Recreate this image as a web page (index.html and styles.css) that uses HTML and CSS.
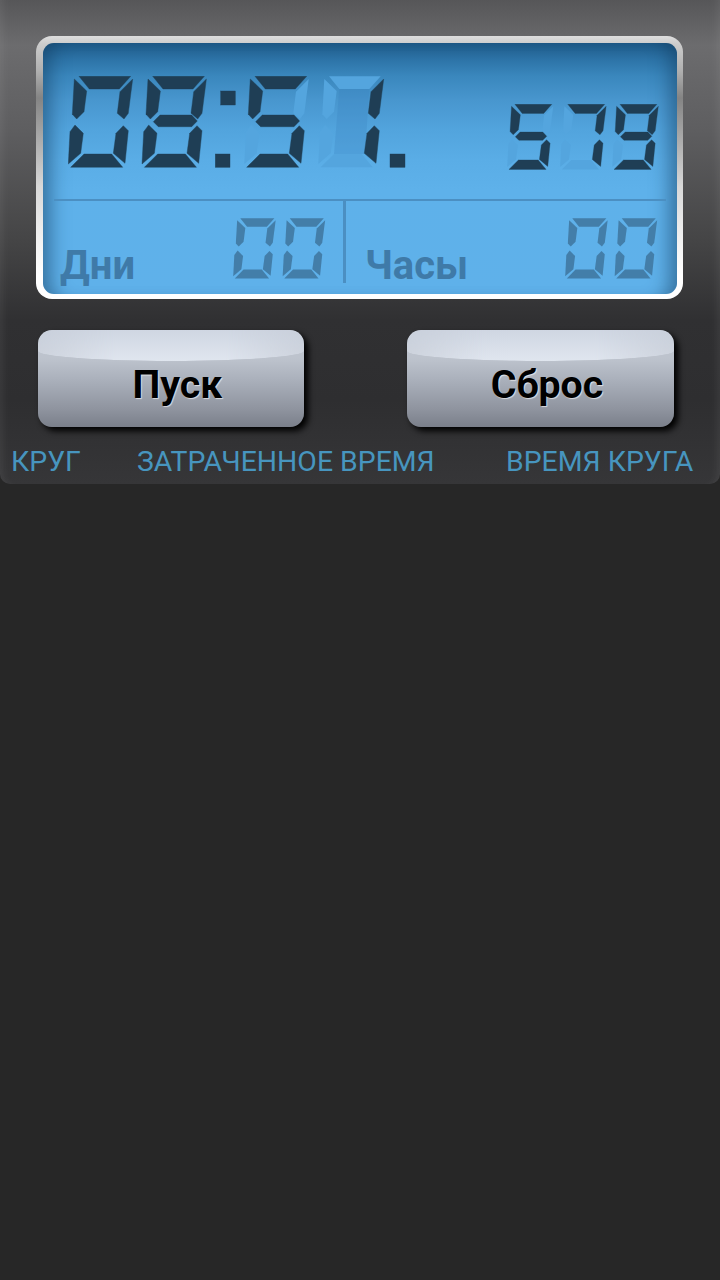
FILE: index.html
```html
<!DOCTYPE html>
<html lang="ru">
<head>
    <meta charset="UTF-8">
    <meta name="viewport" content="width=device-width, initial-scale=1.0">
    <title>Секундомер</title>
    <link rel="stylesheet" href="styles.css">
</head>
<body>
    <!-- seven segment parts, shared by all the readouts -->
    <svg class="sprite" aria-hidden="true">
        <defs>
            <polygon id="sa" points="11,0.3 62.7,0.3 51.3,13 21.3,13"/>
            <polygon id="sb" points="64.7,3 60.3,37.3 56,43 49.3,37.3 52,15.7"/>
            <polygon id="sc" points="55.3,49.7 60.3,54.7 57,87.3 45.3,77.3 48,57.3"/>
            <polygon id="sd" points="16,78 43.7,78 54.7,91.3 2.7,91.3"/>
            <polygon id="se" points="7,49 15.3,57.3 12.7,77.3 0.3,88 2,55.7"/>
            <polygon id="sf" points="6.3,3 18.7,15 16,35.7 8.7,43 4.3,38.3"/>
            <polygon id="sg" points="18.3,39 50,39 55.6,45 50,50.7 16.6,50.7 11.6,45.7"/>
            <polygon id="si" points="21.3,13 51.3,13 47,78 16,78"/>
            <g id="d0"><use href="#sa"/><use href="#sb"/><use href="#sc"/><use href="#sd"/><use href="#se"/><use href="#sf"/></g>
            <g id="d1"><use href="#sb"/><use href="#sc"/></g>
            <g id="d5"><use href="#sa"/><use href="#sc"/><use href="#sd"/><use href="#sf"/><use href="#sg"/></g>
            <g id="d7"><use href="#sa"/><use href="#sb"/><use href="#sc"/></g>
            <g id="d8"><use href="#d0"/><use href="#sg"/></g>
            <g id="d9"><use href="#sa"/><use href="#sb"/><use href="#sc"/><use href="#sd"/><use href="#sf"/><use href="#sg"/></g>
        </defs>
    </svg>

    <div class="panel">
        <div class="lcd-frame">
            <div class="lcd">
                <div class="lcd-top">
                    <svg class="time" viewBox="0 0 338 92">
                        <use href="#d0"/>
                        <use href="#d8" x="73.7"/>
                        <rect x="152.7" y="15" width="14.6" height="14"/>
                        <rect x="147.3" y="78" width="14.7" height="13.3"/>
                        <use class="ghost-inner" href="#si" x="250"/>
                        <g class="ghost">
                            <use href="#sb" x="176"/>
                            <use href="#se" x="176"/>
                            <use href="#sa" x="250"/>
                            <use href="#sf" x="250"/>
                            <use href="#se" x="250"/>
                            <use href="#sd" x="250"/>
                        </g>
                        <use href="#d5" x="176"/>
                        <use href="#d1" x="251"/>
                        <rect x="322" y="78" width="15" height="13.3"/>
                    </svg>
                    <svg class="millis" viewBox="0 0 214 92">
                        <g class="ghost">
                            <use href="#sb"/>
                            <use href="#se"/>
                            <use href="#sf" x="74"/>
                            <use href="#se" x="74"/>
                            <use href="#sd" x="74"/>
                            <use href="#se" x="147"/>
                        </g>
                        <use href="#d5"/>
                        <use href="#d7" x="74"/>
                        <use href="#d9" x="147"/>
                    </svg>
                </div>
                <div class="lcd-line"></div>
                <div class="lcd-bottom">
                    <div class="counter">
                        <span class="counter-name">Дни</span>
                        <svg class="pair" viewBox="0 0 141 92"><use href="#d0"/><use href="#d0" x="75"/></svg>
                    </div>
                    <div class="counter counter-hours">
                        <span class="counter-name">Часы</span>
                        <svg class="pair" viewBox="0 0 141 92"><use href="#d0"/><use href="#d0" x="75"/></svg>
                    </div>
                </div>
            </div>
        </div>

        <div class="buttons">
            <button class="btn">Пуск</button>
            <button class="btn btn-reset">Сброс</button>
        </div>

        <div class="columns">
            <span>КРУГ</span>
            <span>ЗАТРАЧЕННОЕ ВРЕМЯ</span>
            <span>ВРЕМЯ КРУГА</span>
        </div>
    </div>
</body>
</html>
```

FILE: styles.css
```css
body {
    margin: 0;
    height: 1280px;
    background-color: #272727;
    font-family: Roboto, "Liberation Sans", sans-serif;
}
.sprite {
    display: block;
    width: 0;
    height: 0;
}
.panel {
    height: 484px;
    box-sizing: border-box;
    padding-top: 36px;
    border-radius: 0 0 10px 10px;
    background: linear-gradient(#565658 0, #6c6c6e 45px, #5e5e60 130px, #454546 240px, #303032 320px, #2e2e30 400px, #363638 484px);
    box-shadow: inset 8px 0 8px -6px rgba(255, 255, 255, 0.08), inset -8px 0 8px -6px rgba(255, 255, 255, 0.08);
}
.lcd-frame {
    width: 647px;
    height: 263px;
    box-sizing: border-box;
    margin-left: 36px;
    padding: 7px 6px 5px 7px;
    border-radius: 16px;
    background: linear-gradient(#dedede 0, #cccccc 8px, #b0b0b0 35px, #848484 62px, #a8a8a8 100px, #d8d8d8 150px, #f2f2f2 205px, #ffffff 240px);
}
.lcd {
    height: 251px;
    border-radius: 11px;
    background: linear-gradient(#1e5a88 0, #2d74a8 17px, #3a87bd 33px, #4896ce 57px, #52a4dd 87px, #5aade6 117px, #5eb1ea 147px, #5fb1ea 251px);
    box-shadow: inset 22px 0 18px -14px rgba(18, 58, 92, 0.5), inset -22px 0 18px -14px rgba(18, 58, 92, 0.5);
}
.lcd-top {
    display: flex;
    justify-content: space-between;
    align-items: flex-start;
    height: 156px;
    box-sizing: border-box;
    padding: 33px 17px 0 25px;
}
.time {
    width: 338px;
    height: 92px;
    fill: #1f3e55;
    stroke: #1f3e55;
    stroke-width: 0.4;
}
.millis {
    width: 153px;
    height: 66px;
    margin-top: 28px;
    fill: #1f3e55;
    stroke: #1f3e55;
    stroke-width: 0.4;
}
.ghost {
    fill: #54a5de;
    stroke: none;
}
.ghost-inner {
    fill: rgba(58, 130, 190, 0.28);
    stroke: none;
}
.lcd-line {
    height: 2px;
    margin: 0 11px;
    background-color: #4b8fc2;
}
.lcd-bottom {
    display: grid;
    grid-template-columns: 300px 1fr;
    height: 82px;
}
.counter {
    display: flex;
    justify-content: space-between;
    padding: 17px 17px 0 17px;
}
.counter-hours {
    padding: 17px 19px 0 19px;
    border-left: 3px solid #4b8fc2;
}
.counter-name {
    align-self: flex-end;
    font-size: 40px;
    font-weight: 700;
    line-height: 40px;
    margin-bottom: -3px;
    color: #3f7aa8;
}
.pair {
    width: 93px;
    height: 61px;
    fill: #437ea9;
}
.buttons {
    display: flex;
    justify-content: space-between;
    margin-top: 31px;
    padding: 0 46px 0 38px;
}
.btn {
    position: relative;
    width: 266px;
    height: 97px;
    padding: 12px 0 0 13px;
    border: none;
    border-radius: 14px;
    background: linear-gradient(#c4cad5 0, #bcc2cc 30px, #aab0bb 50px, #8e939e 80px, #7a7f8a 97px);
    box-shadow: 4px 4px 6px #000;
    font-family: inherit;
    font-size: 39.3px;
    font-weight: 700;
    color: #000;
    text-shadow: 1px 1px 1px rgba(255, 255, 255, 0.65);
}
.btn::before {
    content: "";
    position: absolute;
    top: 0;
    left: 0;
    right: 0;
    height: 31px;
    border-radius: 14px 14px 50% 50% / 14px 14px 10px 10px;
    background: linear-gradient(#cfd6e2, #e0e6ef);
    -webkit-mask-image: linear-gradient(90deg, rgba(0, 0, 0, 0.5), #000 30%, #000 70%, rgba(0, 0, 0, 0.5));
    mask-image: linear-gradient(90deg, rgba(0, 0, 0, 0.5), #000 30%, #000 70%, rgba(0, 0, 0, 0.5));
}
.btn-reset {
    width: 267px;
}
.columns {
    display: grid;
    grid-template-columns: 126px 369px auto;
    margin-top: 17px;
    padding-left: 11px;
    font-size: 28.4px;
    line-height: 36px;
    color: #4795bf;
}
```
